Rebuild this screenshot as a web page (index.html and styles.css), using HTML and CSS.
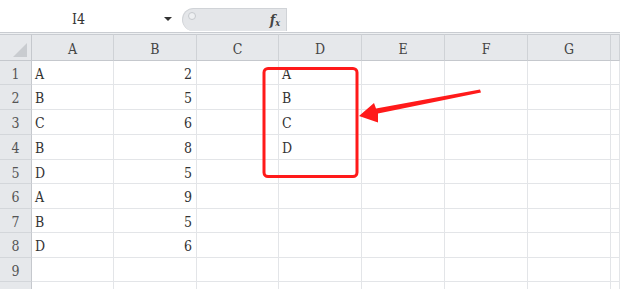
FILE: index.html
```html
<!DOCTYPE html>
<html>
<head>
<meta charset="utf-8">
<link rel="stylesheet" href="styles.css">
</head>
<body>
<div class="app">
  <div class="bar">
    <div class="namebox">I4</div>
    <div class="drop"></div>
    <div class="formula">
      <span class="knob"></span>
      <span class="fx">f<sub>x</sub></span>
    </div>
  </div>
  <div class="sheet">
    <div class="row head">
      <div class="rh corner"><span class="tri"></span></div>
      <div class="c">A</div><div class="c">B</div><div class="c">C</div><div class="c">D</div><div class="c">E</div><div class="c">F</div><div class="c">G</div><div class="c"></div>
    </div>
    <div class="row r24"><div class="rh">1</div><div class="c t">A</div><div class="c n">2</div><div class="c"></div><div class="c t">A</div><div class="c"></div><div class="c"></div><div class="c"></div><div class="c"></div></div>
    <div class="row r25"><div class="rh">2</div><div class="c t">B</div><div class="c n">5</div><div class="c"></div><div class="c t">B</div><div class="c"></div><div class="c"></div><div class="c"></div><div class="c"></div></div>
    <div class="row r25"><div class="rh">3</div><div class="c t">C</div><div class="c n">6</div><div class="c"></div><div class="c t">C</div><div class="c"></div><div class="c"></div><div class="c"></div><div class="c"></div></div>
    <div class="row r25"><div class="rh">4</div><div class="c t">B</div><div class="c n">8</div><div class="c"></div><div class="c t">D</div><div class="c"></div><div class="c"></div><div class="c"></div><div class="c"></div></div>
    <div class="row r24"><div class="rh">5</div><div class="c t">D</div><div class="c n">5</div><div class="c"></div><div class="c"></div><div class="c"></div><div class="c"></div><div class="c"></div><div class="c"></div></div>
    <div class="row r25"><div class="rh">6</div><div class="c t">A</div><div class="c n">9</div><div class="c"></div><div class="c"></div><div class="c"></div><div class="c"></div><div class="c"></div><div class="c"></div></div>
    <div class="row r24"><div class="rh">7</div><div class="c t">B</div><div class="c n">5</div><div class="c"></div><div class="c"></div><div class="c"></div><div class="c"></div><div class="c"></div><div class="c"></div></div>
    <div class="row r25"><div class="rh">8</div><div class="c t">D</div><div class="c n">6</div><div class="c"></div><div class="c"></div><div class="c"></div><div class="c"></div><div class="c"></div><div class="c"></div></div>
    <div class="row r24"><div class="rh">9</div><div class="c"></div><div class="c"></div><div class="c"></div><div class="c"></div><div class="c"></div><div class="c"></div><div class="c"></div><div class="c"></div></div>
    <div class="row r24"><div class="rh"></div><div class="c"></div><div class="c"></div><div class="c"></div><div class="c"></div><div class="c"></div><div class="c"></div><div class="c"></div><div class="c"></div></div>
  </div>
  <svg class="annot" width="620" height="289" viewBox="0 0 620 289">
    <rect x="264" y="68.5" width="93" height="108" rx="4" ry="4" fill="none" stroke="#ff1a1a" stroke-width="3"/>
    <polygon points="359,116 374,103 376,108.5 480,89.5 481,92.5 378,113.5 378,122.5" fill="#ff1a1a"/>
  </svg>
</div>
</body>
</html>
```

FILE: styles.css
```css
* { box-sizing: border-box; }
html, body { margin: 0; padding: 0; background: #fff; }
.app {
  position: relative;
  width: 620px;
  height: 289px;
  overflow: hidden;
  font-family: "DejaVu Serif Condensed", "DejaVu Serif", serif;
  font-stretch: condensed;
  color: #333;
}
.bar {
  height: 33px;
  display: flex;
  align-items: flex-end;
  padding-bottom: 1px;
  border-bottom: 1px solid #c9ccd1;
  box-shadow: 0 1px 0 #eef0f2;
}
.namebox {
  width: 155px;
  text-align: center;
  font-size: 14px;
  line-height: 24px;
  padding-left: 2px;
  color: #333;
}
.drop {
  width: 0;
  height: 0;
  margin: 0 0 10px 9px;
  border-left: 4px solid transparent;
  border-right: 4px solid transparent;
  border-top: 4px solid #333;
}
.formula {
  margin-left: 10px;
  width: 105px;
  height: 23px;
  background: #e4e6e9;
  border: 1px solid #d0d3d7;
  border-radius: 12px 0 0 12px;
  border-bottom: none;
  display: flex;
  align-items: center;
  justify-content: space-between;
  padding: 0 6px 0 5px;
}
.knob {
  width: 8px;
  height: 8px;
  border-radius: 50%;
  border: 1px solid #c6c9cd;
  background: #eef0f2;
  margin-top: -8px;
}
.fx {
  font-family: "DejaVu Serif", serif;
  font-style: italic;
  font-weight: bold;
  font-size: 14px;
  color: #444;
}
.fx sub { font-size: 9px; vertical-align: -1px; }
.sheet { margin-top: 1px; }
.row {
  display: grid;
  grid-template-columns: 32px 82px 83px 82px 83px 83px 83px 83px 1fr;
}
.row.head { height: 27px; }
.row.r24 { height: 24px; }
.row.r25 { height: 25px; }
.rh {
  background: #e6e8eb;
  border-right: 1px solid #c5c8cd;
  border-bottom: 1px solid #d3d6da;
  text-align: center;
  font-size: 14px;
  color: #555;
  display: flex;
  align-items: center;
  justify-content: center;
  padding-top: 2px;
}
.head .c {
  background: #e6e8eb;
  border-right: 1px solid #cfd2d6;
  border-bottom: 1px solid #c5c8cd;
  border-top: 1px solid #c9ccd1;
  display: flex;
  align-items: center;
  justify-content: center;
  font-size: 14px;
  color: #444;
}
.head .rh { border-top: 1px solid #c9ccd1; border-bottom: 1px solid #c5c8cd; position: relative; }
.tri {
  position: absolute;
  right: 4px;
  bottom: 3px;
  width: 0;
  height: 0;
  border-left: 14px solid transparent;
  border-bottom: 14px solid #c9ccd0;
}
.c {
  border-right: 1px solid #e3e5e8;
  border-bottom: 1px solid #e3e5e8;
  font-size: 14px;
  display: flex;
  align-items: center;
  padding-top: 2px;
  color: #333;
}
.c.t { padding-left: 3px; }
.c.n { justify-content: flex-end; padding-right: 4px; }
.annot { position: absolute; left: 0; top: 0; pointer-events: none; }
```
